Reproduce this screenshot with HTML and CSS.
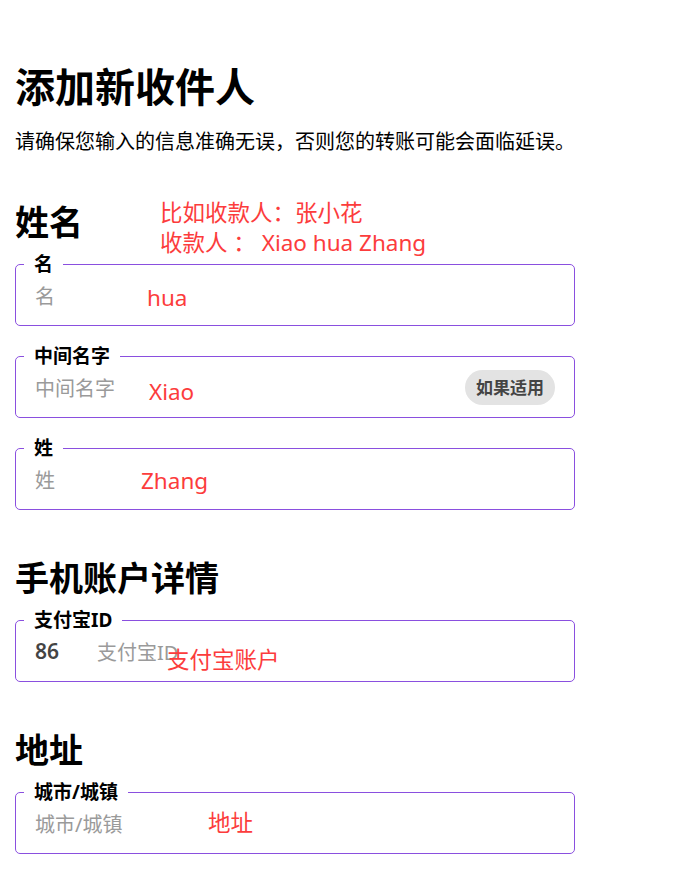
FILE: index.html
```html
<!DOCTYPE html>
<html lang="zh-CN">
<head>
    <meta charset="UTF-8">
    <meta name="viewport" content="width=device-width, initial-scale=1.0">
    <title>添加新收件人</title>
    <link rel="stylesheet" href="styles.css">
</head>
<body>
    <h1>添加新收件人</h1>
    <p class="intro">请确保您输入的信息准确无误，否则您的转账可能会面临延误。</p>

    <!-- Name -->
    <section class="group">
        <h2 class="group-title">
            姓名
            <span class="note note-example">比如收款人：张小花<br>收款人 ： Xiao hua Zhang</span>
        </h2>

        <fieldset class="field">
            <legend>名</legend>
            <div class="field-row">
                <span class="placeholder">名</span>
                <span class="note note-first">hua</span>
            </div>
        </fieldset>

        <fieldset class="field">
            <legend>中间名字</legend>
            <div class="field-row">
                <span class="placeholder">中间名字</span>
                <span class="note note-middle">Xiao</span>
                <span class="tag">如果适用</span>
            </div>
        </fieldset>

        <fieldset class="field">
            <legend>姓</legend>
            <div class="field-row">
                <span class="placeholder">姓</span>
                <span class="note note-last">Zhang</span>
            </div>
        </fieldset>
    </section>

    <!-- Mobile account -->
    <section class="group">
        <h2 class="group-title">手机账户详情</h2>

        <fieldset class="field">
            <legend>支付宝ID</legend>
            <div class="field-row">
                <span class="prefix">86</span>
                <span class="placeholder">支付宝ID</span>
                <span class="note note-alipay">支付宝账户</span>
            </div>
        </fieldset>
    </section>

    <!-- Address -->
    <section class="group">
        <h2 class="group-title">地址</h2>

        <fieldset class="field">
            <legend>城市/城镇</legend>
            <div class="field-row">
                <span class="placeholder">城市/城镇</span>
                <span class="note note-city">地址</span>
            </div>
        </fieldset>
    </section>
</body>
</html>
```

FILE: styles.css
```css
/* General */
body {
    font-family: "Noto Sans", "Noto Sans CJK SC", sans-serif;
    color: #000;
    background-color: #fff;
    margin: 0;
    padding: 63px 15px 0 15px;
}

h1 {
    margin: 0;
    font-size: 40px;
    line-height: 48px;
    font-weight: 700;
}

.intro {
    margin: 16px 0 0 0;
    font-family: "Noto Sans CJK SC", sans-serif;
    font-size: 20px;
    line-height: 28px;
}

/* Sections */
.group {
    margin-top: 46px;
}

.group + .group {
    margin-top: 47px;
}

.group-title {
    position: relative;
    margin: 0 0 9px 0;
    font-size: 34px;
    line-height: 42px;
    font-weight: 700;
}

/* Outlined fields */
.field {
    width: 560px;
    box-sizing: border-box;
    margin: 0 0 18px 0;
    padding: 1px 19px 12px 19px;
    border: 1px solid #8a4fdf;
    border-radius: 5px;
    min-width: 0;
}

.field legend {
    margin-left: -11px;
    padding: 0 10px;
    font-size: 19px;
    line-height: 24px;
    font-weight: 700;
}

.field-row {
    position: relative;
    display: flex;
    align-items: center;
    height: 36px;
}

.placeholder {
    font-size: 20px;
    color: #9a9a9a;
}

.prefix {
    width: 62px;
    font-size: 21px;
    font-weight: 600;
    color: #444;
}

.tag {
    margin-left: auto;
    padding: 0 11px;
    height: 35px;
    line-height: 35px;
    border-radius: 18px;
    background-color: #e3e3e3;
    color: #444;
    font-size: 17px;
    font-weight: 700;
}

/* Red annotations on top of the form */
.note {
    position: absolute;
    color: #fc3c3c;
    font-size: 22.5px;
    line-height: 36px;
    font-weight: 400;
    white-space: nowrap;
}

.note-example {
    left: 145px;
    top: -3px;
    line-height: 30px;
}

.note-first {
    left: 112px;
    top: 3px;
}

.note-middle {
    left: 114px;
    top: 5px;
}

.note-last {
    left: 106px;
    top: 2px;
}

.note-alipay {
    left: 132px;
    top: 9px;
}

.note-city {
    left: 173px;
    top: 0;
}
```
